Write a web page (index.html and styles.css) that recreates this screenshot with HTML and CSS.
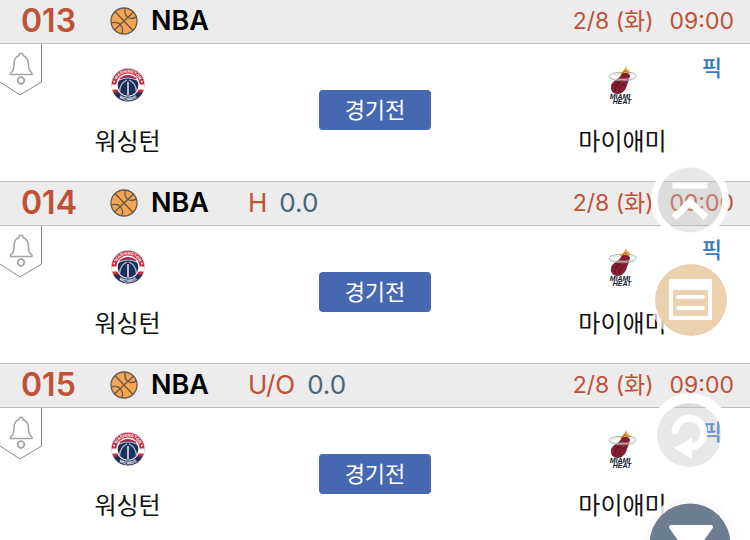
FILE: index.html
```
<!DOCTYPE html>
<html lang="ko">
<head>
  <meta charset="UTF-8">
  <meta name="viewport" content="width=device-width, initial-scale=1.0">
  <title>NBA</title>
  <link rel="stylesheet" href="styles.css">
</head>
<body>

  <!-- shared icons -->
  <svg class="sprite" aria-hidden="true">
    <symbol id="ball" viewBox="0 0 28 28">
      <circle cx="14" cy="14" r="13" fill="#f3a553"/>
      <g fill="none" stroke="#65594b" stroke-width="1.3">
        <circle cx="14" cy="14" r="13"/>
        <path d="M5 4.500L23 23.500M23.500 5L4.500 23"/>
        <path d="M15 1C14.500 6 16 10 19 11C22 12 25 11 26.500 9.500"/>
        <path d="M1.500 16C5 15 9 15.500 11 18.500C13 21.500 13 24.500 11.500 26.500"/>
      </g>
    </symbol>
    <symbol id="bell" viewBox="0 0 42 52">
      <path d="M41.500 0V38L20 51L0 38V0Z" fill="#fff"/>
      <path d="M41.500 0V38L20 51L0 38" fill="none" stroke="#888" stroke-width="1"/>
      <g fill="none" stroke="#a3a3a3" stroke-width="1.5" stroke-linejoin="round">
        <path d="M19 11.500C19 8.500 23 8.500 23 11.500C27 13 28.500 16 28.500 20C28.500 25 29 26.500 32 29V30.500H10.500V29C13.500 26.500 14 25 14 20C14 16 15 13 19 11.500Z"/>
        <circle cx="21" cy="36.500" r="3.300" stroke-width="1.800"/>
      </g>
    </symbol>
    <symbol id="wizards" viewBox="0 0 34 34">
      <circle cx="17" cy="17" r="17" fill="#c9cfdb"/>
      <circle cx="17" cy="17" r="16.300" fill="#cf2b40"/>
      <path d="M2.500 24.500H31.500A16.300 16.300 0 0 1 2.500 24.500Z" fill="#1c2f57"/>
      <path d="M0.500 16.500H33.500V21.500H0.500Z" fill="#fff"/>
      <circle cx="17" cy="17" r="11.500" fill="#fff"/>
      <circle cx="17" cy="17.500" r="10.300" fill="#1b305b"/>
      <path d="M9 10.500Q17 5 25 10.500" fill="none" stroke="#cf2b40" stroke-width="1.500"/>
      <g fill="none" stroke="#c9d0dc">
        <path d="M8.500 12Q17 8 25.500 12" stroke-width="1"/>
        <path d="M16 12Q9 15 8.500 24M18 12Q25 15 25.500 24" stroke-width="1.200"/>
        <path d="M17 14V27" stroke-width="1.800"/>
      </g>
      <path id="arc-top" d="M4.700 17A12.300 12.300 0 0 1 29.300 17" fill="none"/>
      <path id="arc-bottom" d="M1.500 17A15.500 15.500 0 0 0 32.500 17" fill="none"/>
      <text class="crest-text"><textPath href="#arc-top" startOffset="50%">WASHINGTON</textPath></text>
      <text class="crest-text"><textPath href="#arc-bottom" startOffset="50%">WIZARDS</textPath></text>
      <circle cx="3.200" cy="13.500" r="0.900" fill="#fff"/>
      <circle cx="30.800" cy="13.500" r="0.900" fill="#fff"/>
    </symbol>
    <symbol id="heat" viewBox="2 0 34 40">
      <path d="M16.500 9C18 7 19 7.500 20 6C21 5 22 3 23.500 1C24 3 23 4 25 4.500C26.500 5 26 7 28 7.500C26.500 9.500 25 9 24 10Z" fill="#e9a63b"/>
      <path d="M19.500 8L22 5.500L24 7.500" fill="none" stroke="#8c5930" stroke-width="1"/>
      <path d="M19 9C22 8 25 8.500 26.500 10C26 15 24.500 17 23.500 20C22.500 25 19 28.500 14.500 28.500C9.500 28.500 7.500 24.500 8.700 20C10 15.500 16.500 15 19 9Z" fill="#8b1a32" stroke="#51122a" stroke-width="0.800"/>
      <path d="M12 26Q12 20 18 17M16 26Q16 21 21.500 18.500M11.500 21Q14 17 18 16" fill="none" stroke="#4b1027" stroke-width="0.800"/>
      <path d="M18 7.300C2 7.500 2 15.500 19.500 15.800C37 15.500 36 7.500 25 7.300" fill="none" stroke="#9da3a4" stroke-width="0.900"/>
      <path d="M17 8.800C5 9.500 5 14.200 19.500 14.300C34 14.200 33 9.500 26 8.800" fill="none" stroke="#dcdede" stroke-width="1"/>
      <text class="heat-text" x="17" y="33.500">MIAMI</text>
      <text class="heat-text" x="19" y="38.500">HEAT</text>
    </symbol>
  </svg>

  <main class="game-list">
    <section class="game">
      <header class="game-head">
        <span class="game-no">013</span>
        <svg class="ball"><use href="#ball"/></svg>
        <span class="league">NBA</span>
        <time class="game-time"><span>2/8 (화)</span><span>09:00</span></time>
      </header>
      <div class="game-body">
        <button class="alarm-btn" aria-label="알림"><svg><use href="#bell"/></svg></button>
        <div class="team">
          <svg class="team-logo"><use href="#wizards"/></svg>
          <span>워싱턴</span>
        </div>
        <button class="state-btn">경기전</button>
        <div class="team">
          <svg class="team-logo"><use href="#heat"/></svg>
          <span>마이애미</span>
        </div>
        <a class="pick" href="#">픽</a>
      </div>
    </section>

    <section class="game">
      <header class="game-head">
        <span class="game-no">014</span>
        <svg class="ball"><use href="#ball"/></svg>
        <span class="league">NBA</span>
        <span class="bet"><span class="bet-type">H</span><span>0.0</span></span>
        <time class="game-time"><span>2/8 (화)</span><span>09:00</span></time>
      </header>
      <div class="game-body">
        <button class="alarm-btn" aria-label="알림"><svg><use href="#bell"/></svg></button>
        <div class="team">
          <svg class="team-logo"><use href="#wizards"/></svg>
          <span>워싱턴</span>
        </div>
        <button class="state-btn">경기전</button>
        <div class="team">
          <svg class="team-logo"><use href="#heat"/></svg>
          <span>마이애미</span>
        </div>
        <a class="pick" href="#">픽</a>
      </div>
    </section>

    <section class="game">
      <header class="game-head">
        <span class="game-no">015</span>
        <svg class="ball"><use href="#ball"/></svg>
        <span class="league">NBA</span>
        <span class="bet"><span class="bet-type">U/O</span><span>0.0</span></span>
        <time class="game-time"><span>2/8 (화)</span><span>09:00</span></time>
      </header>
      <div class="game-body">
        <button class="alarm-btn" aria-label="알림"><svg><use href="#bell"/></svg></button>
        <div class="team">
          <svg class="team-logo"><use href="#wizards"/></svg>
          <span>워싱턴</span>
        </div>
        <button class="state-btn">경기전</button>
        <div class="team">
          <svg class="team-logo"><use href="#heat"/></svg>
          <span>마이애미</span>
        </div>
        <a class="pick" href="#">픽</a>
      </div>
    </section>
  </main>

  <nav class="quick-menu">
    <button class="quick-btn" aria-label="맨 위로">
      <svg width="80" height="80" viewBox="0 0 80 80">
        <circle cx="40" cy="40" r="35.500" fill="none" stroke="#fff" stroke-width="7"/>
        <circle cx="40" cy="40" r="32.500" fill="#c1c1c1" fill-opacity="0.37"/>
        <path d="M22.500 25.500H57.500" stroke="#fff" stroke-width="6"/>
        <path d="M24 57.500L40 42L56 57.500" fill="none" stroke="#fff" stroke-width="7"/>
      </svg>
    </button>
    <button class="quick-btn" aria-label="목록">
      <svg width="80" height="80" viewBox="0 0 80 80">
        <circle cx="40" cy="40" r="40" fill="#fff" fill-opacity="0.7"/>
        <circle cx="41" cy="40" r="36" fill="#ecd1ae"/>
        <path fill="#fff" fill-rule="evenodd" d="M19 19H62V60H19ZM23 30V56H58V30Z"/>
        <path d="M28 37H53M28 48H53" stroke="#fff" stroke-width="4" stroke-linecap="round"/>
      </svg>
    </button>
    <button class="quick-btn reload-btn" aria-label="새로고침">
      <svg width="84" height="84" viewBox="0 0 84 84">
        <circle cx="42" cy="42" r="36.500" fill="none" stroke="#fff" stroke-width="10"/>
        <circle cx="41" cy="42" r="32" fill="#c1c1c1" fill-opacity="0.37"/>
        <path d="M27 41A14.500 14.500 0 1 1 44 54" fill="none" stroke="#fff" stroke-width="7"/>
        <path d="M26 55L44 45V66Z" fill="#fff"/>
      </svg>
    </button>
    <button class="quick-btn" aria-label="아래로">
      <svg width="94" height="94" viewBox="0 0 94 94">
        <circle cx="47" cy="47" r="47" fill="#fbf9f9" fill-opacity="0.85"/>
        <circle cx="47" cy="47" r="40.500" fill="#6d7d92"/>
        <path d="M28 30H68L48 58Z" fill="#fff" stroke="#fff" stroke-width="4" stroke-linejoin="round"/>
      </svg>
    </button>
  </nav>

</body>
</html>
```

FILE: styles.css
```
* {
  box-sizing: border-box;
}
body {
  margin: 0;
  height: 100vh;
  overflow: hidden;
  background: #fff;
  color: #111;
  font-family: Inter, "Noto Sans CJK KR", sans-serif;
}
button {
  border: none;
  padding: 0;
  font-family: inherit;
  cursor: pointer;
}
.sprite {
  display: none;
}
.game-head {
  display: flex;
  align-items: center;
  padding: 3px 16px 4px 21px;
  line-height: 36px;
  background: #ececec;
  border-top: 1px solid #bebebe;
  border-bottom: 1px solid #bebebe;
}
.game:first-child .game-head {
  border-top: none;
}
.game-no {
  min-width: 89px;
  font-size: 32px;
  font-weight: 600;
  color: #c05036;
}
.ball {
  width: 28px;
  height: 28px;
}
.league {
  min-width: 97px;
  margin-left: 13px;
  font-size: 27px;
  font-weight: 600;
  color: #000;
}
.bet {
  display: flex;
  gap: 12px;
  font-size: 26px;
  color: #45667a;
}
.bet-type {
  color: #c05036;
}
.game-time {
  display: flex;
  gap: 16px;
  margin-left: auto;
  font-size: 23px;
  color: #c05036;
}
.game-body {
  position: relative;
  display: grid;
  grid-template-columns: 34fr 32fr 34fr;
  align-items: center;
  justify-items: center;
  padding: 21px 0;
}
.team {
  display: flex;
  flex-direction: column;
  align-items: center;
  gap: 19px;
  font-size: 24px;
  line-height: 36px;
}
.team-logo {
  width: 34px;
  height: 40px;
}
.state-btn {
  margin-bottom: 6px;
  padding: 0 26px;
  border-radius: 4px;
  background: #4668b0;
  color: #fff;
  font-size: 22px;
  line-height: 40px;
}
.alarm-btn {
  position: absolute;
  top: 0;
  left: 0;
  background: none;
}
.alarm-btn svg {
  display: block;
  width: 42px;
  height: 52px;
}
.pick {
  position: absolute;
  top: 8px;
  right: 28px;
  color: #3478c6;
  font-size: 22px;
  font-weight: 500;
  line-height: 32px;
  text-decoration: none;
}
.quick-menu {
  position: fixed;
  top: 160px;
  right: 13px;
  display: flex;
  flex-direction: column;
  align-items: center;
  gap: 20px;
}
.quick-btn {
  background: none;
}
.quick-btn svg {
  display: block;
}
.reload-btn {
  margin-top: 33px;
}
.crest-text {
  fill: #fff;
  font-family: Inter, sans-serif;
  font-size: 4px;
  font-weight: 700;
  text-anchor: middle;
}
.heat-text {
  fill: #111827;
  font-family: "Liberation Sans", sans-serif;
  font-size: 7px;
  font-weight: 700;
  font-style: italic;
  text-anchor: middle;
}
```
